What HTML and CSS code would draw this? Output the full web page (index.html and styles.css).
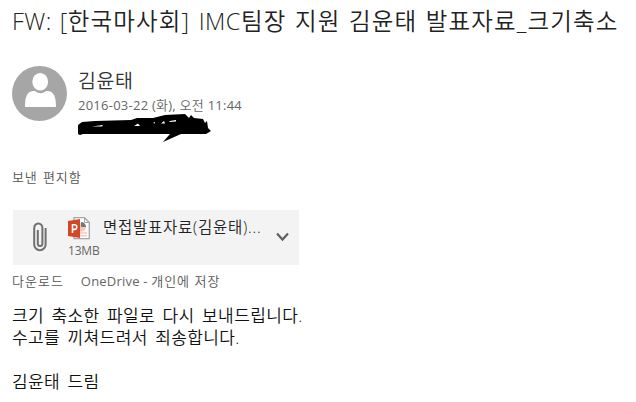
FILE: index.html
```html
<!DOCTYPE html>
<html lang="ko">
<head>
<meta charset="utf-8">
<title>FW: [한국마사회] IMC팀장 지원 김윤태 발표자료_크기축소</title>
<link rel="stylesheet" href="styles.css">
</head>
<body>
<main class="mail">
  <h1 class="subject"><span class="prefix">FW: [</span>한국마사회] <span class="prefix">IMC</span>팀장 지원 김윤태 발표자료_크기축소</h1>
  <header class="sender">
    <svg class="avatar" width="55" height="55" viewBox="0 0 55 55">
      <circle cx="27.5" cy="27.5" r="27.5" fill="#a6a6a6"/>
      <ellipse cx="28.2" cy="15.8" rx="7.9" ry="8.8" fill="#fff"/>
      <path d="M13 41C13 31 15 25.5 21 25L23 25Q28.500 29.500 34 25L36 25C42 25.500 44 31 44 41Z" fill="#fff"/>
    </svg>
    <div class="details">
      <div class="name">김윤태</div>
      <div class="date"><span class="latin">2016-03-22 (</span>화<span class="latin">), </span>오전 <span class="latin">11:44</span></div>
      <svg class="scribble" width="134" height="30" viewBox="0 0 134 30">
        <path d="M0 11L4 8L17 7L53 6L59 4L75 4L87 1L107 0L111 4L113 1L116 4L125 5L127 9L129 7L130 14L133 17L128 20L103 20L94 24L85 28L92 20L5 20L2 21L0 20Z"/>
        <path d="M14 12.500L25 11L24 12.500ZM56 12L60 9.500L62 12ZM75 9L77 8L77 9.500ZM83 9.500L86 7L87 9.500ZM92 7L98 6L98 7.500L91 8Z" fill="#fff"/>
      </svg>
    </div>
  </header>
  <div class="folder">보낸 편지함</div>
  <section class="attachment">
    <svg class="clip" width="14" height="30" viewBox="0 0 14 30" fill="none" stroke="#707070" stroke-width="2">
      <path d="M12.600 6V22.500A5.700 5.700 0 0 1 1.200 22.500V6A4.100 4.600 0 0 1 9.400 6V21.500A2.300 2.600 0 0 1 4.800 21.500V8"/>
    </svg>
    <div class="file">
      <div class="file-row">
        <svg width="23" height="23" viewBox="0 0 23 23">
          <path d="M6 .7H16.500L21.300 5.500V21.700H6Z" fill="#fff" stroke="#a5a5a5" stroke-width="1.300"/>
          <path d="M16.500 .7V5.500H21.300" fill="none" stroke="#a5a5a5"/>
          <path d="M12 6A4.500 4.500 0 1 1 11 14H12Z" fill="#f3c9ba"/>
          <path d="M13 5V10H18A5 5 0 0 0 13 5Z" fill="#777"/>
          <path d="M12 16H19M12 18.800H19" stroke="#f3c9ba" stroke-width="1.400"/>
          <path d="M0 4L12 2V21L0 19Z" fill="#d24726"/>
          <path d="M4.500 16V7.800H6.500Q8.800 7.800 8.800 10T6.500 12.400H4.500" fill="none" stroke="#fff" stroke-width="1.600"/>
        </svg>
        <span class="file-name">면접발표자료(김윤태)...</span>
      </div>
      <div class="size latin">13MB</div>
    </div>
    <svg class="chevron" width="13" height="10" viewBox="0 0 13 10"><path d="M1 1.500L6.500 7.500L12 1.500" fill="none" stroke="#606060" stroke-width="2.200"/></svg>
  </section>
  <nav class="actions"><span>다운로드</span><span class="save"><span class="latin onedrive">OneDrive - </span>개인에 저장</span></nav>
  <div class="body">
    <p>크기 축소한 파일로 다시 보내드립니다.</p>
    <p>수고를 끼쳐드려서 죄송합니다.</p>
    <p class="sign">김윤태 드림</p>
  </div>
</main>
</body>
</html>
```
FILE: styles.css
```css
* { box-sizing: border-box; }
body { margin: 0; background: #fff; color: #333; font-family: "Open Sans", "Noto Sans CJK KR", sans-serif; font-weight: 350; }
.mail { width: 636px; height: 402px; padding: 5px 0 0 12px; overflow: hidden; white-space: nowrap; }
.latin { font-weight: 400; }
.subject { margin: 0; height: 61px; font-size: 23.5px; font-weight: 350; line-height: 32px; letter-spacing: 1.15px; word-spacing: 1.2px; color: #222; }
.prefix { letter-spacing: .5px; }
.sender { display: flex; height: 101px; }
.avatar { flex: none; }
.details { padding-left: 11px; }
.name { height: 30px; font-size: 19.5px; line-height: 30px; letter-spacing: .6px; }
.date { height: 18px; font-size: 13px; line-height: 19px; letter-spacing: .25px; color: #666; }
.scribble { display: block; }
.folder { height: 43px; font-size: 13px; line-height: 20px; color: #555; letter-spacing: .9px; word-spacing: 1px; }
.attachment { display: flex; width: 286px; height: 55px; margin-left: 1px; padding-left: 20px; background: #f3f3f3; }
.clip { margin-top: 12px; }
.file { width: 208px; margin-left: 21px; padding-top: 7px; }
.file-row { display: flex; height: 24px; }
.file-name { padding-left: 12px; font-size: 15.5px; line-height: 20px; letter-spacing: .75px; color: #222; }
.size { font-size: 12px; line-height: 19px; letter-spacing: -.2px; color: #666; }
.chevron { margin-top: 22px; }
.actions { display: flex; height: 40px; padding-top: 6px; font-size: 13px; line-height: 20px; letter-spacing: 1px; color: #555; }
.save { margin-left: 17px; }
.onedrive { letter-spacing: .2px; color: #666; }
.body { font-size: 17px; line-height: 22px; color: #111; letter-spacing: .4px; word-spacing: 2.6px; }
.body p { margin: 0; }
.body .sign { margin-top: 22px; }
```
